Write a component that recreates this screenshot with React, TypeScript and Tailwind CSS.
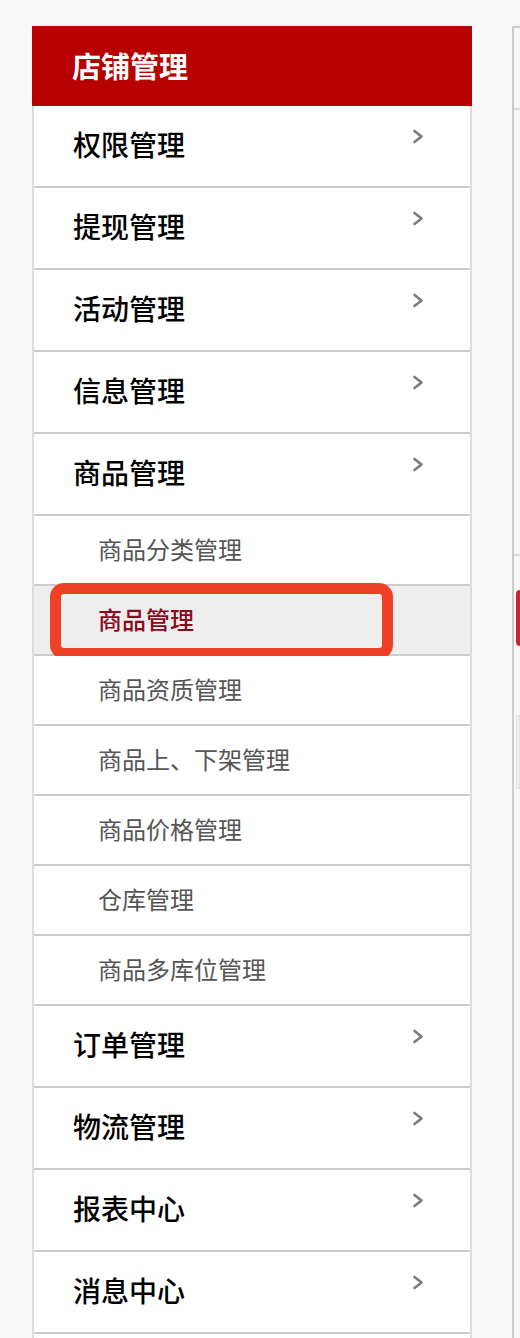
const mainTop = ['权限管理', '提现管理', '活动管理', '信息管理', '商品管理']
const subItems = ['商品分类管理', '商品管理', '商品资质管理', '商品上、下架管理', '商品价格管理', '仓库管理', '商品多库位管理']
const mainBottom = ['订单管理', '物流管理', '报表中心', '消息中心']
const activeSub = 1

const cjk = "font-['Noto_Sans_CJK_SC',sans-serif]"

function Chevron() {
  return (
    <svg width="12" height="15" viewBox="0 0 12 15" className="mt-[23px]">
      <path d="M2.5 2 L9.5 7.5 L2.5 13" fill="none" stroke="#7a7a7a" strokeWidth="2.6" strokeLinecap="round" strokeLinejoin="round" />
    </svg>
  )
}

function MainRow({ label }: { label: string }) {
  return (
    <div className="flex h-[82px] items-start justify-between border-b-2 border-[#cccccc] bg-white pl-[39px] pr-[46px]">
      <span className="mt-[18px] text-[28px] leading-[40px] font-medium text-black">{label}</span>
      <Chevron />
    </div>
  )
}

function SubRow({ label, active }: { label: string; active: boolean }) {
  return (
    <div
      className={
        active
          ? 'relative flex h-[70px] items-center border-b-2 border-[#cccccc] bg-[#eeeeee] pl-[64px] pb-[2px]'
          : 'relative flex h-[70px] items-center border-b-2 border-[#cccccc] bg-white pl-[64px] pb-[2px]'
      }
    >
      <span className={active ? 'text-[24px] font-medium text-[#8c0a1c]' : 'text-[24px] text-[#555555]'}>{label}</span>
      {active && (
        <div className="absolute left-[16px] top-[-3px] h-[76px] w-[343px] rounded-[14px] border-[11px] border-[#ef4128]" />
      )}
    </div>
  )
}

export default function App() {
  return (
    <div className={`${cjk} flex h-[1338px] overflow-hidden bg-[#f8f8f8] pt-[26px] pl-[32px]`}>
      <div className="w-[440px] shrink-0">
        <div className="flex h-[80px] items-center bg-[#b70000] pl-[40px]">
          <span className="text-[29px] font-bold text-white">店铺管理</span>
        </div>
        <div className="border-x-2 border-[#dddddd]">
          {mainTop.map((m) => (
            <MainRow key={m} label={m} />
          ))}
          {subItems.map((s, i) => (
            <SubRow key={s} label={s} active={i === activeSub} />
          ))}
          {mainBottom.map((m) => (
            <MainRow key={m} label={m} />
          ))}
          <div className="h-[10px] bg-white" />
        </div>
      </div>

      <div className="ml-[40px] flex flex-1 flex-col border-l-2 border-t-2 border-[#cccccc]">
        <div className="h-[82px] border-b-2 border-[#dddddd]" />
        <div className="h-[446px] border-b-2 border-[#dddddd]" />
        <div className="mt-[34px] ml-[2px] h-[56px] rounded-l-[5px] bg-[#c1272d]" />
        <div className="mt-[69px] ml-[2px] h-[74px] border border-[#e2e2e2] bg-[#eeeeee]" />
      </div>
    </div>
  )
}
